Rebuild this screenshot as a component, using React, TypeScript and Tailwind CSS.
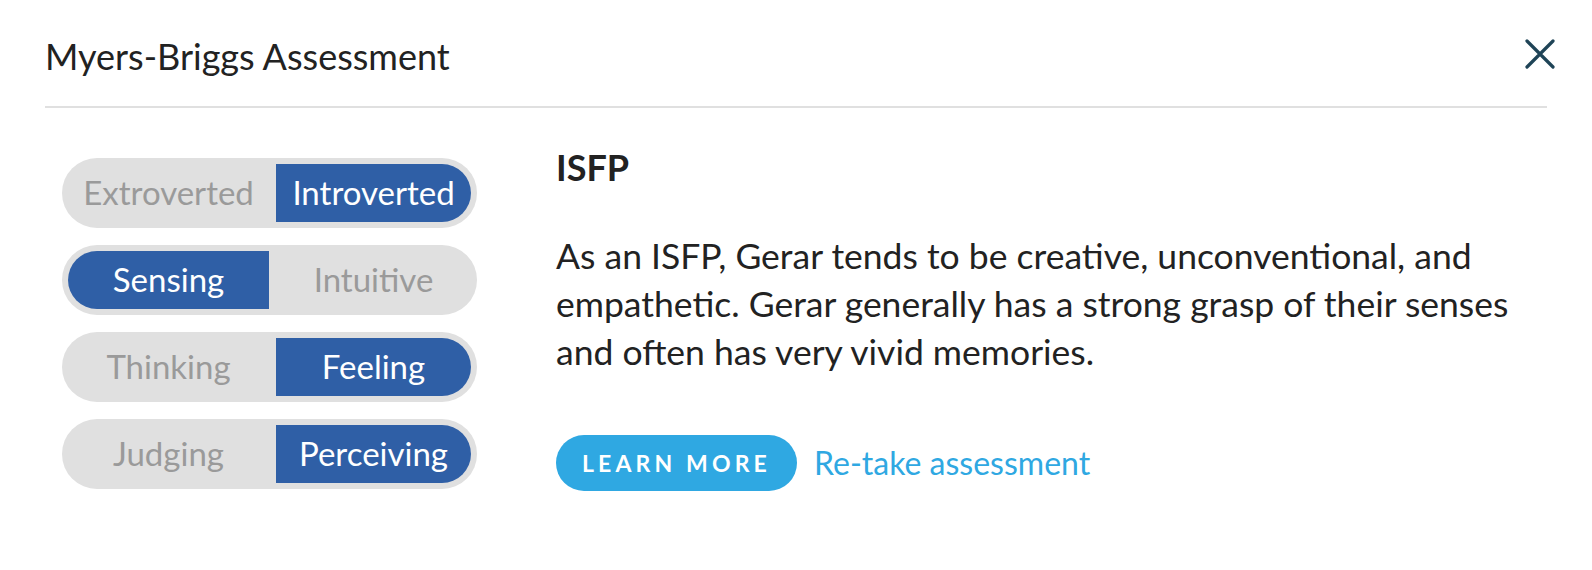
import React from 'react';

const traits = [
  { left: 'Extroverted', right: 'Introverted', pick: 'right' },
  { left: 'Sensing', right: 'Intuitive', pick: 'left' },
  { left: 'Thinking', right: 'Feeling', pick: 'right' },
  { left: 'Judging', right: 'Perceiving', pick: 'right' },
];

function TraitToggle({ left, right, pick }: { left: string; right: string; pick: string }) {
  const on = 'bg-[#2f5fa6] text-white';
  const off = 'text-[#9a9a9a]';
  return (
    <div className="flex h-[70px] w-[415px] rounded-full bg-[#e0e0e0] p-[6px]">
      <div
        className={`flex w-[201px] items-center justify-center rounded-l-full ${pick === 'left' ? on : off}`}
      >
        {left}
      </div>
      <div
        className={`ml-[7px] flex flex-1 items-center justify-center rounded-r-full ${pick === 'right' ? on : off}`}
      >
        {right}
      </div>
    </div>
  );
}

export default function App() {
  return (
    <div className="min-h-[570px] bg-white px-[45px] font-['Lato',sans-serif] text-[#222]">
      <div className="flex h-[108px] items-center justify-between border-b-2 border-[#e0e0e0]">
        <h1 className="pt-[5px] text-[36px] leading-none">Myers-Briggs Assessment</h1>
        <button className="-mr-[8px] mt-[2px] text-[#1f4457]">
          <svg width="30" height="30" viewBox="0 0 30 30" fill="none" stroke="currentColor" strokeWidth="3.2" strokeLinecap="round">
            <path d="M2 2 L28 28 M28 2 L2 28" />
          </svg>
        </button>
      </div>

      <div className="flex pt-[50px]">
        <div className="ml-[17px] flex flex-col gap-[17px] text-[33px]">
          {traits.map((t) => (
            <TraitToggle key={t.left} {...t} />
          ))}
        </div>

        <div className="ml-[79px] flex-1">
          <h2 className="-mt-[13px] text-[36px] font-bold leading-[44px]">ISFP</h2>
          <p className="mt-[43px] text-[35.5px] leading-[48px]">
            As an ISFP, Gerar tends to be creative, unconventional, and empathetic. Gerar generally has a strong grasp
            of their senses and often has very vivid memories.
          </p>
          <div className="mt-[59px] flex items-center gap-[17px]">
            <button className="h-[56px] rounded-full bg-[#2fa8e2] px-[26px] text-[23px] font-bold tracking-[0.18em] text-white">
              LEARN MORE
            </button>
            <a className="text-[32px] text-[#2fa8e2]" href="#">
              Re-take assessment
            </a>
          </div>
        </div>
      </div>
    </div>
  );
}
